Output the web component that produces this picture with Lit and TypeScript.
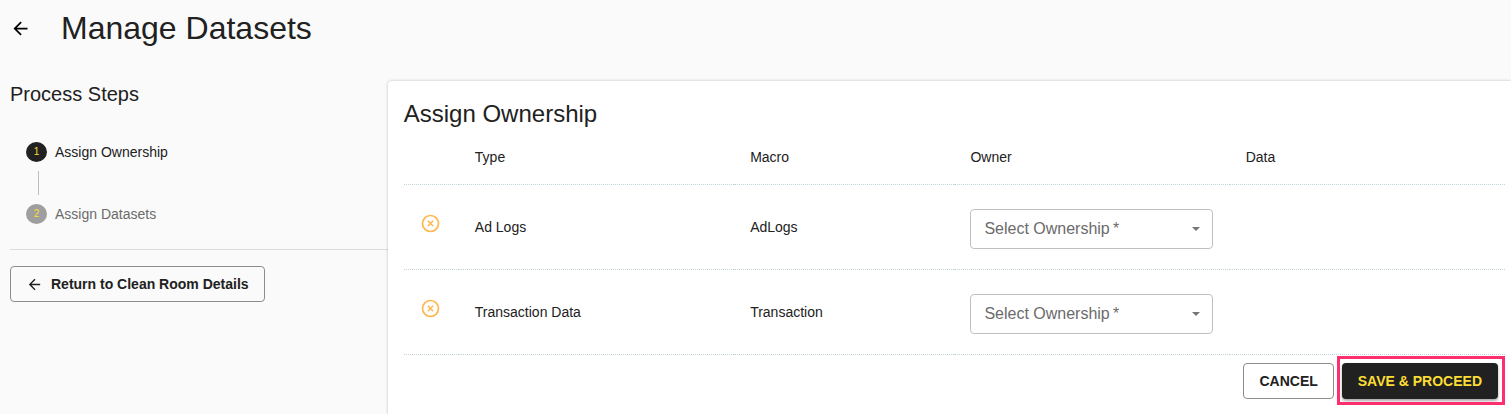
import { LitElement, html, css, svg } from "lit";
import { customElement, state } from "lit/decorators.js";

interface DatasetRow {
  id: string;
  type: string;
  macro: string;
}

const arrowBack = svg`<path d="M20 11H7.83l5.59-5.59L12 4l-8 8 8 8 1.41-1.41L7.83 13H20v-2z"></path>`;

@customElement("app-root")
export class AppRoot extends LitElement {
  static styles = css`
    :host {
      display: block;
      min-height: 100vh;
      background: #fafafa;
      color: #212121;
      font-family: "Liberation Sans", Helvetica, Arial, sans-serif;
      font-size: 14px;
      line-height: 20px;
    }
    * {
      box-sizing: border-box;
    }
    h1,
    h2,
    ol {
      margin: 0;
      padding: 0;
      font-weight: 400;
    }
    button,
    select {
      font-family: inherit;
      margin: 0;
    }
    .page {
      display: flex;
      flex-direction: column;
      min-height: 100vh;
    }
    .header {
      display: flex;
      align-items: center;
      gap: 30px;
      height: 56px;
      padding-left: 10px;
    }
    .back {
      display: flex;
      border: 0;
      padding: 0;
      background: none;
      color: #000;
    }
    .icon {
      display: block;
      fill: currentColor;
    }
    h1 {
      font-size: 32px;
      line-height: 40px;
    }
    .content {
      flex: 1;
      display: flex;
      padding-top: 25px;
    }
    .side {
      flex: 0 0 calc(25% + 10px);
      padding-left: 10px;
    }
    .side h2 {
      font-size: 20px;
      line-height: 26px;
    }
    .steps {
      list-style: none;
      padding: 32px 16px 23px;
      border-bottom: 1px solid #dcdcdc;
    }
    .step {
      display: flex;
      align-items: center;
      gap: 8px;
      height: 25px;
    }
    .step + .step {
      margin-top: 37px;
      color: #6b6b6b;
      position: relative;
    }
    .step + .step::before {
      content: "";
      position: absolute;
      left: 12px;
      bottom: 31px;
      height: 24px;
      border-left: 1px solid #bdbdbd;
    }
    .dot {
      width: 21px;
      height: 20px;
      border-radius: 50%;
      background: #9e9e9e;
      color: #fbdd33;
      font-size: 10px;
      text-align: center;
    }
    .dot.active {
      background: #212121;
    }
    .btn {
      display: inline-flex;
      align-items: center;
      justify-content: center;
      height: 36px;
      padding: 0 15px;
      border: 1px solid #8c8c8c;
      border-radius: 4px;
      background: transparent;
      color: #212121;
      font-size: 14px;
      font-weight: 700;
      white-space: nowrap;
    }
    .return {
      gap: 8px;
      margin-top: 16px;
    }
    .card {
      flex: 1;
      min-width: 0;
      padding: 16px 6px 16px 16px;
      background: #fff;
      border-radius: 4px 0 0 0;
      box-shadow: 0 0 3px rgba(0, 0, 0, 0.25);
    }
    .card h2 {
      font-size: 24px;
      line-height: 34px;
    }
    table {
      width: 100%;
      table-layout: fixed;
      border-collapse: separate;
      border-spacing: 0;
    }
    th,
    td {
      text-align: left;
      font-weight: 400;
      padding: 0 16px;
      border-bottom: 1px dotted #c3d3da;
    }
    th {
      height: 54px;
      padding-bottom: 2px;
    }
    td {
      height: 85px;
    }
    .w5 {
      width: 5%;
    }
    .w20 {
      width: 20%;
    }
    .w25 {
      width: 25%;
    }
    .status {
      display: block;
      margin-bottom: 8px;
      fill: none;
      stroke: #ffb74d;
    }
    .picker {
      position: relative;
      width: 243px;
      margin-top: 4px;
    }
    .picker select {
      display: block;
      width: 100%;
      height: 40px;
      padding: 0 32px 2px 13px;
      border: 1px solid #c0c0c0;
      border-radius: 4px;
      background: #fff;
      color: #6b6b6b;
      font-size: 16px;
      appearance: none;
    }
    .caret {
      position: absolute;
      right: 13px;
      top: 18px;
      border: 4px solid transparent;
      border-top-color: #757575;
      border-bottom: 0;
      pointer-events: none;
    }
    .actions {
      display: flex;
      justify-content: flex-end;
      gap: 8px;
      padding: 8px 7px 0 0;
    }
    .primary {
      position: relative;
      padding: 0 16px;
      border: 0;
      background: #212121;
      color: #fbdd33;
      box-shadow: 0 2px 3px rgba(0, 0, 0, 0.35);
    }
    .primary::after {
      content: "";
      position: absolute;
      inset: -7px -7px -6px -5px;
      border: 3px solid #fd2f6f;
      pointer-events: none;
    }
  `;

  @state() private rows: DatasetRow[] = [
    { id: "ad-logs", type: "Ad Logs", macro: "AdLogs" },
    { id: "transaction", type: "Transaction Data", macro: "Transaction" },
  ];

  private renderRow(row: DatasetRow) {
    return html`<tr>
      <td>
        <svg class="status" width="20" height="20" viewBox="0 0 20 20" role="img" aria-label="Not assigned">
          <circle cx="10.5" cy="10.5" r="8" stroke-width="1.7"></circle>
          <path d="M7.8 7.8l5.4 5.4M13.2 7.8l-5.4 5.4" stroke-width="1.5"></path>
        </svg>
      </td>
      <td>${row.type}</td>
      <td>${row.macro}</td>
      <td>
        <div class="picker">
          <select id=${row.id} aria-label="Select Ownership" required>
            <option value="">Select Ownership\u2009*</option>
          </select>
          <span class="caret"></span>
        </div>
      </td>
      <td></td>
    </tr>`;
  }

  render() {
    return html`<div class="page">
      <header class="header">
        <button class="back" aria-label="Back">
          <svg class="icon" width="21" height="21" viewBox="0 0 24 24">${arrowBack}</svg>
        </button>
        <h1>Manage Datasets</h1>
      </header>
      <div class="content">
        <aside class="side">
          <h2>Process Steps</h2>
          <ol class="steps">
            <li class="step"><span class="dot active">1</span>Assign Ownership</li>
            <li class="step"><span class="dot">2</span>Assign Datasets</li>
          </ol>
          <button class="btn return">
            <svg class="icon" width="17" height="17" viewBox="0 0 24 24">${arrowBack}</svg>
            Return to Clean Room Details
          </button>
        </aside>
        <main class="card">
          <h2>Assign Ownership</h2>
          <table>
            <thead>
              <tr>
                <th class="w5"></th>
                <th class="w25">Type</th>
                <th class="w20">Macro</th>
                <th class="w25">Owner</th>
                <th class="w25">Data</th>
              </tr>
            </thead>
            <tbody>
              ${this.rows.map((row) => this.renderRow(row))}
            </tbody>
          </table>
          <div class="actions">
            <button class="btn">CANCEL</button>
            <button class="btn primary">SAVE &amp; PROCEED</button>
          </div>
        </main>
      </div>
    </div>`;
  }
}
